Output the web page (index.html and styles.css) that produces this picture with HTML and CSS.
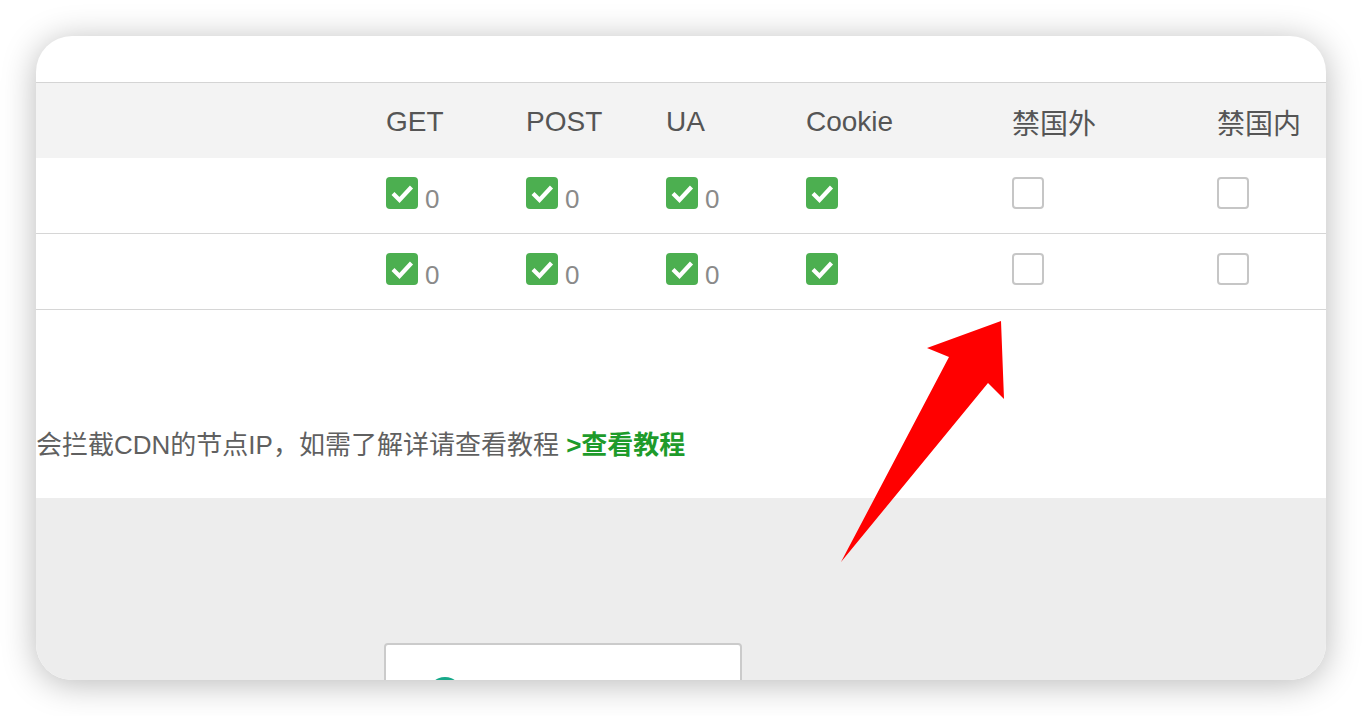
FILE: index.html
```html
<!DOCTYPE html>
<html lang="zh-CN">
<head>
<meta charset="utf-8">
<title>CDN 设置</title>
<link rel="stylesheet" href="styles.css">
</head>
<body>
<div class="stage">
  <div class="window">
    <div class="topbar"></div>
    <div class="table">
      <div class="row head">
        <div class="cell first"></div>
        <div class="cell">GET</div>
        <div class="cell">POST</div>
        <div class="cell">UA</div>
        <div class="cell">Cookie</div>
        <div class="cell">禁国外</div>
        <div class="cell">禁国内</div>
      </div>
      <div class="row">
        <div class="cell first"></div>
        <div class="cell"><span class="chk on"><svg viewBox="0 0 32 32"><polyline points="7,16.5 13.5,23 25.5,10"/></svg></span><span class="num">0</span></div>
        <div class="cell"><span class="chk on"><svg viewBox="0 0 32 32"><polyline points="7,16.5 13.5,23 25.5,10"/></svg></span><span class="num">0</span></div>
        <div class="cell"><span class="chk on"><svg viewBox="0 0 32 32"><polyline points="7,16.5 13.5,23 25.5,10"/></svg></span><span class="num">0</span></div>
        <div class="cell"><span class="chk on"><svg viewBox="0 0 32 32"><polyline points="7,16.5 13.5,23 25.5,10"/></svg></span></div>
        <div class="cell"><span class="chk"></span></div>
        <div class="cell"><span class="chk"></span></div>
      </div>
      <div class="row">
        <div class="cell first"></div>
        <div class="cell"><span class="chk on"><svg viewBox="0 0 32 32"><polyline points="7,16.5 13.5,23 25.5,10"/></svg></span><span class="num">0</span></div>
        <div class="cell"><span class="chk on"><svg viewBox="0 0 32 32"><polyline points="7,16.5 13.5,23 25.5,10"/></svg></span><span class="num">0</span></div>
        <div class="cell"><span class="chk on"><svg viewBox="0 0 32 32"><polyline points="7,16.5 13.5,23 25.5,10"/></svg></span><span class="num">0</span></div>
        <div class="cell"><span class="chk on"><svg viewBox="0 0 32 32"><polyline points="7,16.5 13.5,23 25.5,10"/></svg></span></div>
        <div class="cell"><span class="chk"></span></div>
        <div class="cell"><span class="chk"></span></div>
      </div>
    </div>
    <div class="notice">
      <p class="notice-text">会拦截CDN的节点IP，如需了解详请查看教程 <a class="link" href="#">&gt;查看教程</a></p>
    </div>
    <div class="lower">
      <div class="card">
        <span class="dot"></span>
      </div>
    </div>
  </div>
  <svg class="arrow" viewBox="0 0 1362 716" width="1362" height="716">
    <polygon points="1001,321 927,348 949,357 841,562 988,383 1004,399" fill="#ff0000"/>
  </svg>
</div>
</body>
</html>
```
FILE: styles.css
```css
html, body {
  margin: 0;
  padding: 0;
  background: #ffffff;
}

body {
  font-family: "Liberation Sans", "Noto Sans CJK SC", sans-serif;
  width: 1362px;
  height: 716px;
  overflow: hidden;
}

.stage {
  position: relative;
  width: 1362px;
  height: 716px;
  padding: 36px;
  box-sizing: border-box;
}

.window {
  width: 1290px;
  height: 644px;
  border-radius: 36px;
  overflow: hidden;
  background: #ffffff;
  box-shadow: 0 4px 34px rgba(0, 0, 0, 0.28);
  display: flex;
  flex-direction: column;
}

.topbar {
  height: 46px;
  border-bottom: 1px solid #d4d4d4;
  flex: none;
}

.table {
  flex: none;
}

.row {
  display: grid;
  grid-template-columns: 350px 140px 140px 140px 206px 205px 1fr;
  height: 75px;
  border-bottom: 1px solid #d6d6d6;
}

.row.head {
  background: #f3f3f3;
  border-bottom: none;
  align-items: center;
}

.row.head .cell {
  font-size: 28px;
  color: #555555;
  padding-top: 2px;
}

.cell {
  display: flex;
  align-items: flex-start;
  white-space: nowrap;
}

.row:not(.head) .cell {
  padding-top: 19px;
}

.chk {
  width: 32px;
  height: 32px;
  box-sizing: border-box;
  border: 2px solid #c6c6c6;
  border-radius: 4px;
  background: #ffffff;
  flex: none;
  display: block;
}

.chk.on {
  background: #4caf50;
  border: none;
}

.chk svg {
  width: 32px;
  height: 32px;
  display: block;
}

.chk polyline {
  fill: none;
  stroke: #ffffff;
  stroke-width: 4.2;
  stroke-linecap: butt;
  stroke-linejoin: miter;
}

.num {
  font-size: 26px;
  line-height: 32px;
  color: #8a8a8a;
  margin-left: 7px;
  margin-top: 6px;
}

.notice {
  height: 188px;
  display: flex;
  flex-direction: column;
  justify-content: flex-end;
  flex: none;
}

.notice-text {
  margin: 0 0 35px 0;
  font-size: 26px;
  line-height: 36px;
  color: #606060;
  white-space: nowrap;
}

.link {
  color: #1e9b2b;
  font-weight: bold;
  text-decoration: none;
}

.lower {
  flex: 1;
  background: #ededed;
  padding: 145px 0 0 348px;
}

.card {
  width: 358px;
  height: 120px;
  box-sizing: border-box;
  border: 2px solid #cbcbcb;
  border-radius: 4px;
  background: #ffffff;
  padding: 32px 0 0 42px;
}

.dot {
  display: block;
  width: 34px;
  height: 34px;
  border-radius: 50%;
  background: #17a98a;
}

.arrow {
  position: absolute;
  left: 0;
  top: 0;
  pointer-events: none;
}
```
